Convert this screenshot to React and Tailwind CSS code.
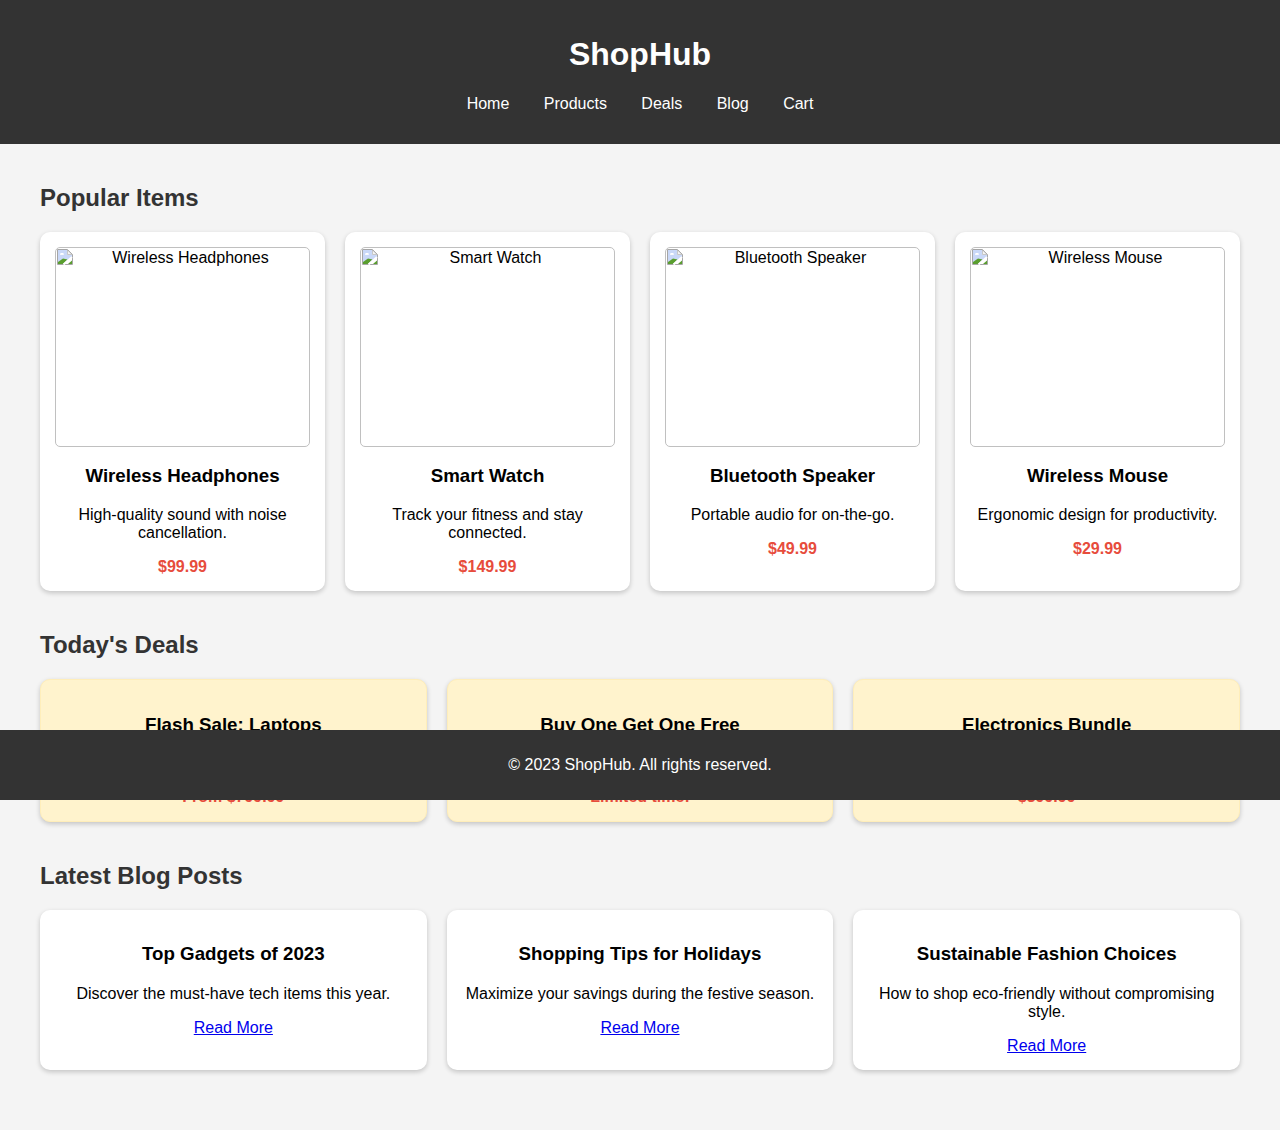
const items = [
    { name: 'Wireless Headphones', desc: 'High-quality sound with noise cancellation.', price: '$99.99' },
    { name: 'Smart Watch', desc: 'Track your fitness and stay connected.', price: '$149.99' },
    { name: 'Bluetooth Speaker', desc: 'Portable audio for on-the-go.', price: '$49.99' },
    { name: 'Wireless Mouse', desc: 'Ergonomic design for productivity.', price: '$29.99' },
];

const deals = [
    { name: 'Flash Sale: Laptops', desc: 'Up to 30% off on select models.', price: 'From $799.99' },
    { name: 'Buy One Get One Free', desc: 'On all accessories this week.', price: 'Limited time!' },
    { name: 'Electronics Bundle', desc: 'Save big with our bundle deals.', price: '$399.99' },
];

const posts = [
    { name: 'Top Gadgets of 2023', desc: 'Discover the must-have tech items this year.' },
    { name: 'Shopping Tips for Holidays', desc: 'Maximize your savings during the festive season.' },
    { name: 'Sustainable Fashion Choices', desc: 'How to shop eco-friendly without compromising style.' },
];

const cardClass = 'bg-white rounded-[10px] p-[15px] text-center shadow-[0_2px_5px_rgba(0,0,0,0.2)]';
const titleClass = 'text-[18.72px] font-bold leading-[21px]';

const BrokenIcon = () => (
    <svg width="16" height="16" viewBox="0 0 16 16" className="absolute left-px top-px">
        <path d="M0.5 15.5V0.5H10.5L15.5 5.5V15.5H0.5" fill="#fff" stroke="#a6a6a6" />
        <path d="M1 1H10V6H15V8L7 15H1Z" fill="#c9d8f8" />
        <path d="M10.5 1L15 5.5H10.5Z" fill="#f4f4f4" stroke="#a6a6a6" strokeWidth="0.6" />
        <path d="M3 5C3.6 3.6 6.4 3.6 7 5C7.6 6.2 2.4 6.2 3 5Z" fill="#fff" />
        <path d="M1 15V13L6 9.5L10.5 10.5L6 15Z" fill="#5a9e2f" />
        <path d="M6.5 15.5L15 8" stroke="#fff" strokeWidth="2" />
        <path d="M11 15L15 11.5V15Z" fill="#5a9e2f" />
    </svg>
);

const BrokenImage = ({ alt }) => (
    <div className="relative h-[200px] border border-[#c0c0c0] rounded-[5px] overflow-hidden">
        <BrokenIcon />
        <span className="block leading-[18px] pl-4 pt-px">{alt}</span>
    </div>
);

const Section = ({ title, cols, children }) => (
    <section className="mb-10">
        <h2 className="text-2xl font-bold text-[#333] leading-[28px] mb-[19.92px]">{title}</h2>
        <div className={cols}>{children}</div>
    </section>
);

const App = () => {
    return (
        <div className="relative h-[1130px] bg-[#f4f4f4] text-black font-['Liberation_Sans',Arial,sans-serif] text-base leading-[18px] overflow-hidden">
            <header className="h-36 bg-[#333] text-white text-center pt-[36px]">
                <h1 className="text-[32px] leading-9 font-bold mb-[23px]">ShopHub</h1>
                <nav className="flex justify-center gap-[34.45px]">
                    {['Home', 'Products', 'Deals', 'Blog', 'Cart'].map(link => (
                        <a key={link} href="#" className="text-white">{link}</a>
                    ))}
                </nav>
            </header>

            <main className="px-10 pt-10">
                <Section title="Popular Items" cols="grid grid-cols-4 gap-5">
                    {items.map(item => (
                        <div key={item.name} className={cardClass}>
                            <BrokenImage alt={item.name} />
                            <h3 className={`${titleClass} mt-[18px] mb-5`}>{item.name}</h3>
                            <p className="mb-4">{item.desc}</p>
                            <p className="font-bold text-[#e74c3c]">{item.price}</p>
                        </div>
                    ))}
                </Section>

                <Section title="Today's Deals" cols="grid grid-cols-3 gap-5">
                    {deals.map(deal => (
                        <div key={deal.name} className="bg-[#fff3cd] border border-[#ffeeba] rounded-[10px] p-[15px] text-center shadow-[0_2px_5px_rgba(0,0,0,0.2)]">
                            <h3 className={`${titleClass} my-[19px]`}>{deal.name}</h3>
                            <p className="mb-4">{deal.desc}</p>
                            <p className="font-bold text-[#e74c3c]">{deal.price}</p>
                        </div>
                    ))}
                </Section>

                <Section title="Latest Blog Posts" cols="grid grid-cols-3 gap-5">
                    {posts.map(post => (
                        <div key={post.name} className={cardClass}>
                            <h3 className={`${titleClass} mt-[18px] mb-[21px]`}>{post.name}</h3>
                            <p className="mb-4">{post.desc}</p>
                            <a href="#" className="block text-[#0000ee] underline">Read More</a>
                        </div>
                    ))}
                </Section>
            </main>

            <footer className="absolute left-0 right-0 top-[730px] h-[70px] bg-[#333] text-white text-center pt-[26px]">
                © 2023 ShopHub. All rights reserved.
            </footer>
        </div>
    );
};

export default App;
